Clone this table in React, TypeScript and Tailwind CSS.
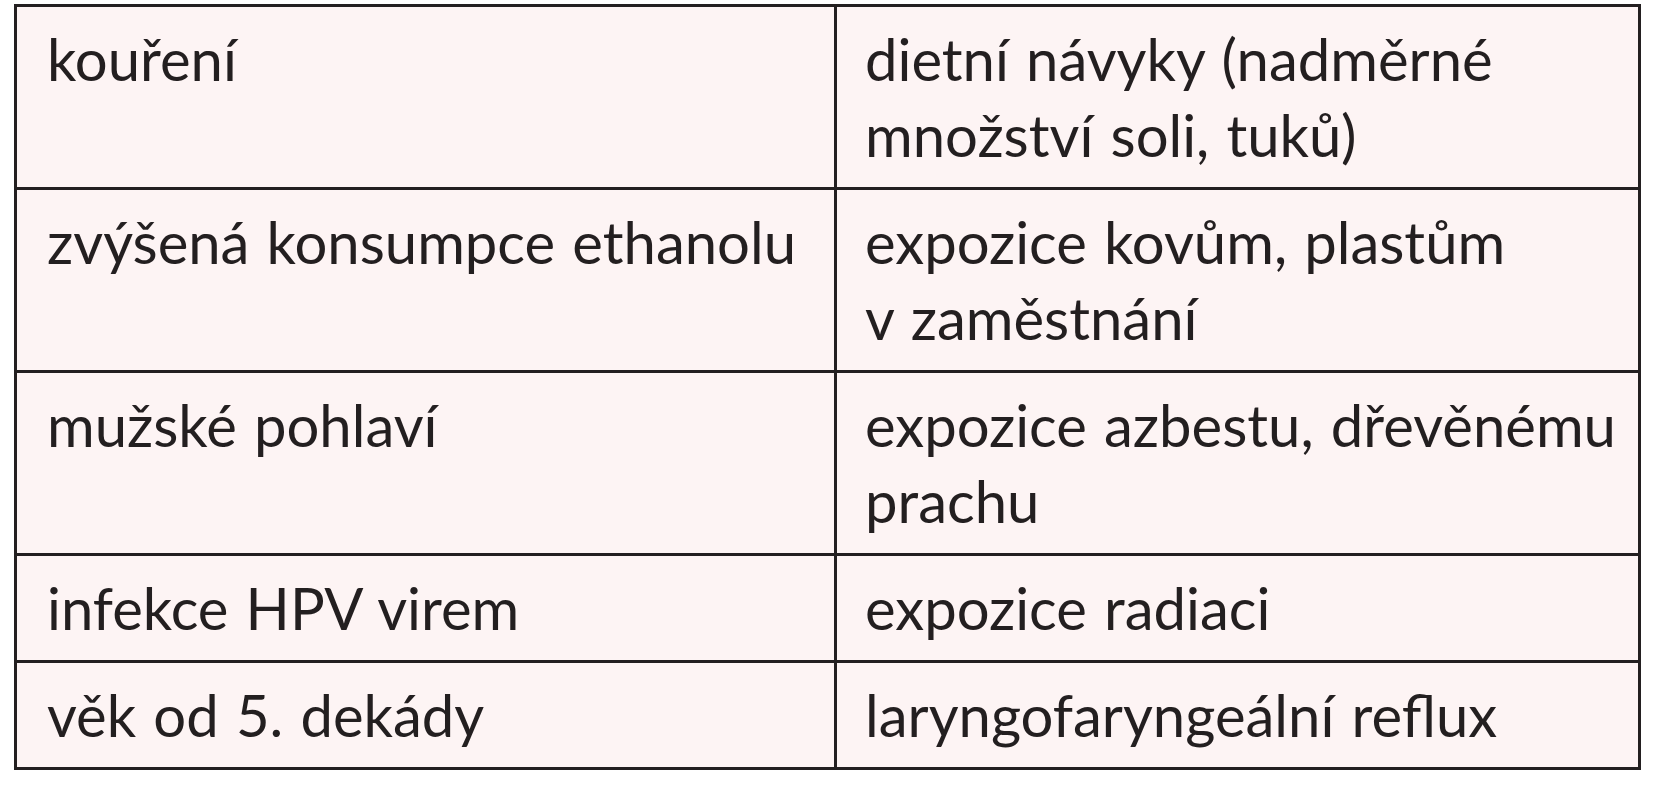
const rows: [string[], string[]][] = [
  [['kouření'], ['dietní návyky (nadměrné', 'množství soli, tuků)']],
  [['zvýšená konsumpce ethanolu'], ['expozice kovům, plastům', 'v zaměstnání']],
  [['mužské pohlaví'], ['expozice azbestu, dřevěnému', 'prachu']],
  [['infekce HPV virem'], ['expozice radiaci']],
  [['věk od 5. dekády'], ['laryngofaryngeální reflux']],
]

function Cell({ lines, left }: { lines: string[]; left?: boolean }) {
  return (
    <div
      className={
        left
          ? 'w-[820px] shrink-0 border-r-[3px] border-[#231f20] pl-[30px] pr-2 py-[14px]'
          : 'flex-1 pl-[28px] pr-2 py-[14px]'
      }
    >
      {lines.map((l) => (
        <div key={l} className="whitespace-nowrap">
          {l}
        </div>
      ))}
    </div>
  )
}

export default function App() {
  return (
    <div className="h-[800px] w-[1660px] bg-white pl-[14px] pt-[4px]">
      <div
        className="w-[1627px] border-[3px] border-[#231f20] bg-[#fdf4f4] text-[58px] leading-[76px] text-[#231f20] [word-spacing:0.04em]"
        style={{ fontFamily: 'Lato, "Open Sans", sans-serif' }}
      >
        {rows.map(([a, b], i) => (
          <div key={i} className={i === 0 ? 'flex' : 'flex border-t-[3px] border-[#231f20]'}>
            <Cell lines={a} left />
            <Cell lines={b} />
          </div>
        ))}
      </div>
    </div>
  )
}
